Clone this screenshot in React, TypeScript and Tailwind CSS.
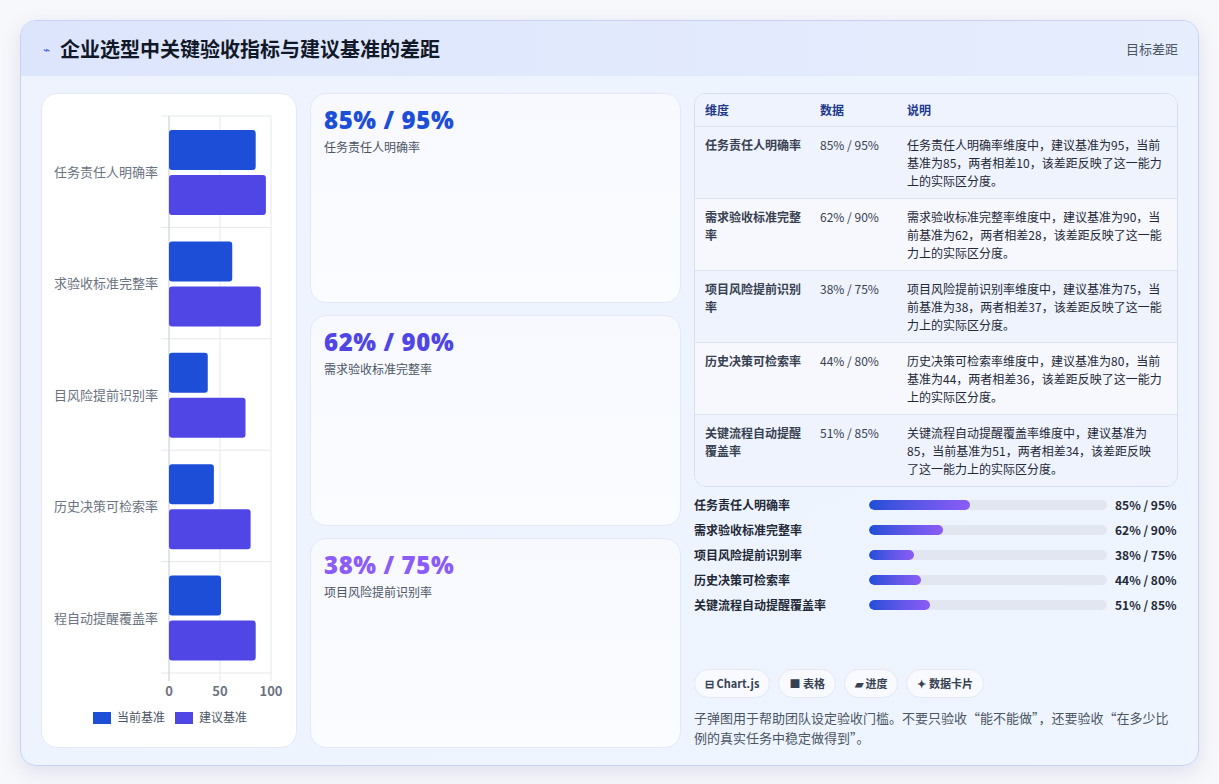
import React from "react";

const rows = [
  { k: "任务责任人明确率", c: 85, t: 95 },
  { k: "需求验收标准完整率", c: 62, t: 90 },
  { k: "项目风险提前识别率", c: 38, t: 75 },
  { k: "历史决策可检索率", c: 44, t: 80 },
  { k: "关键流程自动提醒覆盖率", c: 51, t: 85 },
];

const font = { fontFamily: '"Noto Sans CJK SC", "Noto Sans", sans-serif' };

function Chart() {
  const x0 = 127, s = 1.02, top = 22, band = 111.4;
  return (
    <svg width="256" height="653" className="block">
      <defs>
        <clipPath id="lc"><rect x="12" y="0" width="244" height="653" /></clipPath>
      </defs>
      {[0, 50, 100].map((v) => (
        <line key={v} x1={x0 + v * s} x2={x0 + v * s} y1={top} y2={587} stroke="#e5e7eb" />
      ))}
      {[0, 1, 2, 3, 4, 5].map((i) => (
        <line key={i} x1={119} x2={229} y1={top + i * band} y2={top + i * band} stroke="#e5e7eb" />
      ))}
      <line x1={x0} x2={x0} y1={top} y2={587} stroke="#d1d5db" />
      {rows.map((r, i) => {
        const y = top + i * band;
        return (
          <g key={r.k}>
            <rect x={x0} y={y + 14} width={r.c * s} height={40} rx={3} fill="#1d4ed8" />
            <rect x={x0} y={y + 59} width={r.t * s} height={40} rx={3} fill="#4f46e5" />
            <text clipPath="url(#lc)" x={116} y={y + 61} textAnchor="end" fontSize="13" fill="#6b7280" style={font}>{r.k}</text>
          </g>
        );
      })}
      {[0, 50, 100].map((v) => (
        <text key={v} x={x0 + v * s} y={602} textAnchor="middle" fontSize="13" fill="#6b7280" fontWeight="600" style={font}>{v}</text>
      ))}
      <rect x={51} y={618} width={18} height={12} fill="#1d4ed8" />
      <text x={75} y={628} fontSize="12" fill="#4b5563" style={font}>当前基准</text>
      <rect x={133} y={618} width={18} height={12} fill="#4f46e5" />
      <text x={157} y={628} fontSize="12" fill="#4b5563" style={font}>建议基准</text>
    </svg>
  );
}

const cardColors = ["text-[#1d4ed8]", "text-[#4f46e5]", "text-[#8b5cf6]"];

export default function App() {
  return (
    <div className="w-[1219px] h-[784px] bg-[#f7f8fb] p-5" style={font}>
      <div className="h-[746px] rounded-2xl border border-[#c7d2f5] overflow-hidden bg-gradient-to-br from-[#eef3fe] to-[#eef5ff] shadow-[0_6px_20px_rgba(80,90,160,0.15)] flex flex-col">
        <div className="h-[55px] shrink-0 bg-gradient-to-r from-[#dde5fd] to-[#e6edfd] flex items-center justify-between pl-[22px] pr-5">
          <div className="flex items-center gap-[10px]">
            <span className="text-[#3b5bdb] text-[12px]">⌁</span>
            <h1 className="text-[20px] font-bold text-[#111827]">企业选型中关键验收指标与建议基准的差距</h1>
          </div>
          <span className="text-[13px] text-[#4b5563]">目标差距</span>
        </div>
        <div className="flex-1 flex gap-[13px] px-5 pt-[17px] pb-[18px]">
          <div className="w-[256px] bg-white rounded-2xl border border-[#e3e9f7] overflow-hidden">
            <Chart />
          </div>
          <div className="w-[371px] flex flex-col gap-3">
            {rows.slice(0, 3).map((r, i) => (
              <div key={r.k} className="flex-1 rounded-2xl border border-[#e3e9f7] bg-gradient-to-b from-[#f7f9ff] to-[#fbfcff] px-[13px] pt-[10px]">
                <div className={`text-[24px] font-extrabold leading-[32px] tracking-wide ${cardColors[i]}`} style={{ fontFamily: '"Open Sans", sans-serif' }}>{r.c}% / {r.t}%</div>
                <div className="text-[12px] text-[#4b5563] mt-[2px]">{r.k}</div>
              </div>
            ))}
          </div>
          <div className="flex-1 flex flex-col">
            <div className="rounded-xl border border-[#d7def0] overflow-hidden bg-[#f4f7fe]">
              <table className="w-full table-fixed text-[12px] text-[#1f2937] border-collapse">
                <colgroup>
                  <col className="w-[125px]" />
                  <col className="w-[87px]" />
                  <col />
                </colgroup>
                <thead>
                  <tr className="h-[32px] text-left text-[#1e3a8a] font-semibold bg-[#eef3fd]">
                    <th className="pl-[10px] font-semibold">维度</th>
                    <th className="font-semibold">数据</th>
                    <th className="font-semibold">说明</th>
                  </tr>
                </thead>
                <tbody>
                  {rows.map((r, i) => (
                    <tr key={r.k} className={`border-t border-[#dde3f0] align-top ${i % 2 === 0 ? "bg-[#eef3fd]" : "bg-[#f6f8fe]"}`}>
                      <td className="pl-[10px] pr-3 pt-[9px] pb-[8px] leading-[18px] font-semibold text-[#374151]">{r.k}</td>
                      <td className="pt-[9px] leading-[18px] text-[#374151]">{r.c}% / {r.t}%</td>
                      <td className="pt-[9px] pb-[8px] pr-[14px] leading-[18px] text-[#1f2937]">{r.k}维度中，建议基准为{r.t}，当前基准为{r.c}，两者相差{r.t - r.c}，该差距反映了这一能力上的实际区分度。</td>
                    </tr>
                  ))}
                </tbody>
              </table>
            </div>
            <div className="mt-[10px] flex flex-col gap-[9px]">
              {rows.map((r) => (
                <div key={r.k} className="flex items-center h-[16px] text-[12px] whitespace-nowrap">
                  <span className="w-[175px] shrink-0 font-semibold text-[#1f2937]">{r.k}</span>
                  <div className="w-[238px] shrink-0 h-[10px] rounded-full bg-[#e2e6f0] overflow-hidden">
                    <div className="h-full rounded-full bg-gradient-to-r from-[#1d4ed8] to-[#8b5cf6]" style={{ width: `${r.c / 2}%` }} />
                  </div>
                  <span className="ml-2 font-bold text-[#1f2937]">{r.c}% / {r.t}%</span>
                </div>
              ))}
            </div>
            <div className="flex-1" />
            <div className="flex gap-2 text-[11px] font-bold text-[#374151]">
              {["⊟ Chart.js", "■ 表格", "▰ 进度", "✦ 数据卡片"].map((c) => (
                <span key={c} className="h-[29px] px-[10px] flex items-center rounded-full border border-[#e3e8f3] bg-[#f8faff]">{c}</span>
              ))}
            </div>
            <p className="mt-[10px] pr-2 text-[13px] leading-[20px] text-[#4b5563]">子弹图用于帮助团队设定验收门槛。不要只验收“能不能做”，还要验收“在多少比例的真实任务中稳定做得到”。</p>
          </div>
        </div>
      </div>
    </div>
  );
}
